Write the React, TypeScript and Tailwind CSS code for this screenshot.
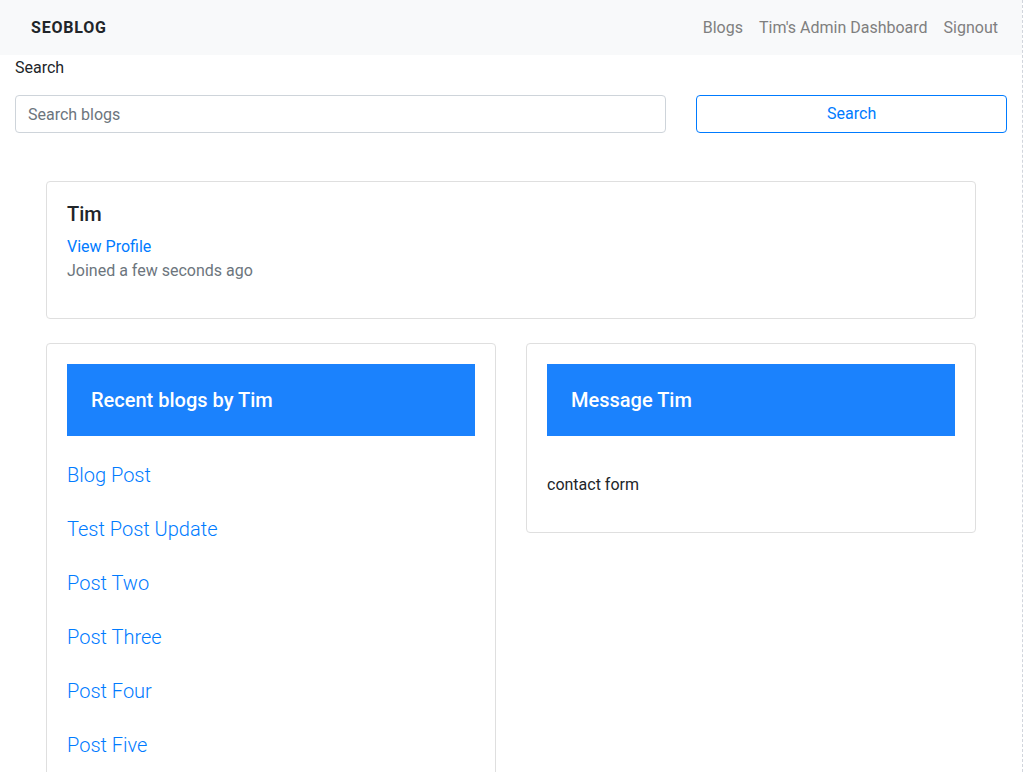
const blogs = ["Blog Post", "Test Post Update", "Post Two", "Post Three", "Post Four", "Post Five"];

const App = () => {
  return (
    <div className="w-[1023px] h-[772px] overflow-hidden bg-white border-r border-dashed border-gray-300 font-['Roboto',sans-serif] text-[#212529]">
      {/* Navbar */}
      <nav className="h-[55px] bg-[#f8f9fa] flex items-center justify-between pl-[31px] pr-4">
        <a href="#" className="text-[16px] font-bold tracking-[0.05em] text-[#212529]">SEOBLOG</a>
        <div className="flex items-center text-[16px] text-[#7f7f7f]">
          <a href="#" className="px-2">Blogs</a>
          <a href="#" className="px-2">Tim's Admin Dashboard</a>
          <a href="#" className="px-2">Signout</a>
        </div>
      </nav>

      {/* Search */}
      <div className="px-[15px]">
        <p className="text-[16px] leading-6 pt-px">Search</p>
        <form className="grid grid-cols-3 gap-[30px] mt-[15px]">
          <input
            type="search"
            placeholder="Search blogs"
            className="col-span-2 h-[38px] px-3 rounded border border-[#ced4da] text-[16px] placeholder:text-[#6c757d] focus:outline-none"
          />
          <button type="submit" className="h-[38px] rounded border border-[#007bff] text-[#007bff] text-[16px]">
            Search
          </button>
        </form>
      </div>

      <div className="w-[960px] mx-auto px-[15px] mt-12">
        {/* Profile card */}
        <div className="border border-[#dfdfdf] rounded p-5">
          <h5 className="text-[20px] leading-6 font-medium mb-2">Tim</h5>
          <a href="#" className="block text-[#007bff] text-[16px] leading-6 pt-px">View Profile</a>
          <p className="text-[#6c757d] text-[16px] leading-6 mb-[15px]">Joined a few seconds ago</p>
        </div>

        <div className="grid grid-cols-2 gap-[30px] mt-6 items-start">
          {/* Recent blogs */}
          <div className="border border-[#dfdfdf] rounded p-5 pb-10">
            <div className="bg-[#1b82fd] px-6 py-6 text-white text-[20px] leading-6 font-medium">
              Recent blogs by Tim
            </div>
            <div className="flex flex-col gap-6 mt-6">
              {blogs.map((b) => (
                <a key={b} href="#" className="text-[#007bff] text-[20px] leading-[30px] font-light">
                  {b}
                </a>
              ))}
            </div>
          </div>

          {/* Message */}
          <div className="border border-[#dfdfdf] rounded p-5">
            <div className="bg-[#1b82fd] px-6 py-6 text-white text-[20px] leading-6 font-medium">
              Message Tim
            </div>
            <p className="mt-9 mb-[15px] text-[16px] leading-6 pt-px">contact form</p>
          </div>
        </div>
      </div>
    </div>
  );
};

export default App;
